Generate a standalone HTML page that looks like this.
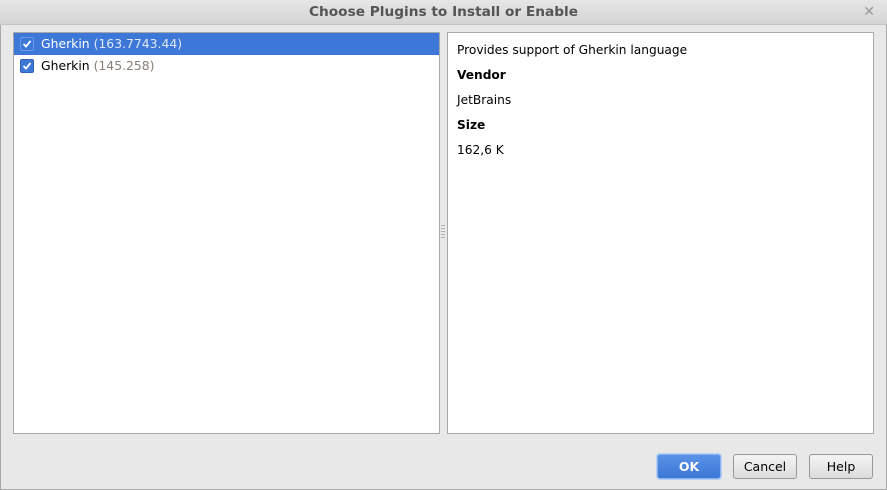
<!DOCTYPE html>
<html><head><meta charset="utf-8"><style>
*{margin:0;padding:0;box-sizing:border-box}
body{width:887px;height:490px;overflow:hidden;background:#e8e8e8;font-family:"DejaVu Sans","Liberation Sans",sans-serif;font-size:12px;color:#000;position:relative}
.win{position:absolute;left:0;top:0;width:887px;height:490px;border:1px solid #a8a8a8;border-top:none}
.title{position:absolute;left:0;top:0;width:887px;height:25px;background:linear-gradient(#e6e6e6,#d4d4d4);border-bottom:1px solid #c4c4c4;text-align:center;line-height:25px;font-weight:bold;font-size:13.7px;color:#555}
.x{position:absolute;right:12px;top:0;font-size:14px;color:#999;font-weight:bold}
.panel{position:absolute;background:#fff;border:1px solid #a8a8a8}
.row{position:absolute;left:0;width:425px;height:22px;line-height:22px;padding-left:27px;font-size:12.4px}
.sel{background:#3d78d8;color:#fff}
.cb{position:absolute;left:6px;top:4px;width:14px;height:14px;background:#3d78d8;border-radius:2px;border:1px solid #2f63b8}
.sel .cb{border-color:#6a9ae6}
.cb svg{position:absolute;left:1px;top:1px}
.ver{color:#8a8077}
.sel .ver{color:#dfe8f8}
.r p{position:absolute;left:9px;font-size:12.2px}
.btn{position:absolute;top:454px;width:64px;height:25px;border:1px solid #999;border-radius:3px;background:linear-gradient(#f4f4f4,#dcdcdc);text-align:center;line-height:23px;font-size:12.5px}
.ok{background:linear-gradient(#5a92e6,#3d78d8);border-color:#8ab4f0;color:#fff;font-weight:bold;box-shadow:0 0 0 1px #b8d0f4}
</style></head><body>
<div class="win"></div>
<div class="title">Choose Plugins to Install or Enable<span class="x">✕</span></div>
<div class="panel" style="left:13px;top:32px;width:427px;height:402px">
 <div class="row sel" style="top:0"><span class="cb"><svg width="10" height="10" viewBox="0 0 10 10"><path d="M1.5 5 L4 7.5 L8.5 2" stroke="#fff" stroke-width="1.8" fill="none"/></svg></span>Gherkin <span class="ver">(163.7743.44)</span></div>
 <div class="row" style="top:22px"><span class="cb"><svg width="10" height="10" viewBox="0 0 10 10"><path d="M1.5 5 L4 7.5 L8.5 2" stroke="#fff" stroke-width="1.8" fill="none"/></svg></span>Gherkin <span class="ver">(145.258)</span></div>
</div>
<div style="position:absolute;left:441px;top:225px;width:4px;height:14px;background:repeating-linear-gradient(#b0b0b0 0 1px,transparent 1px 3px)"></div>
<div class="panel r" style="left:447px;top:32px;width:427px;height:402px">
 <p style="top:10px">Provides support of Gherkin language</p>
 <p style="top:35px;font-weight:bold">Vendor</p>
 <p style="top:60px">JetBrains</p>
 <p style="top:85px;font-weight:bold">Size</p>
 <p style="top:110px">162,6 K</p>
</div>
<div class="btn ok" style="left:657px">OK</div>
<div class="btn" style="left:733px">Cancel</div>
<div class="btn" style="left:809px">Help</div>
</body></html>
